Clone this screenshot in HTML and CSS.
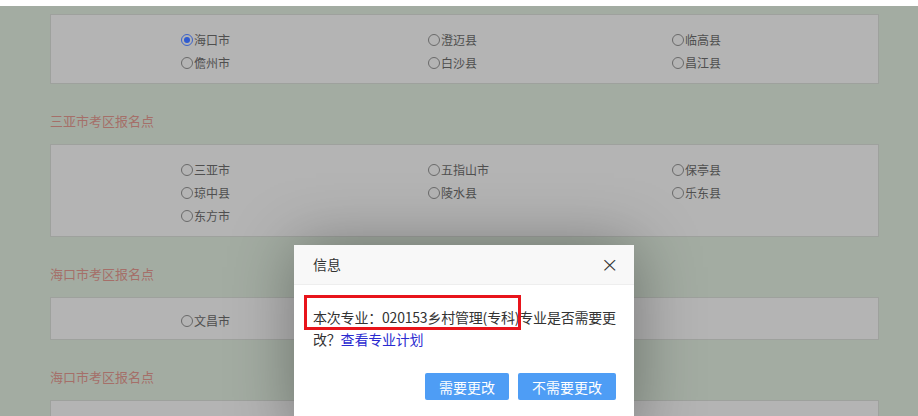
FILE: index.html
```html
<!DOCTYPE html>
<html lang="zh-CN">
<head>
  <meta charset="UTF-8">
  <title>报名点选择</title>
  <link rel="stylesheet" href="styles.css">
</head>
<body>

  <div class="topbar"></div>

  <div class="page">
    <div class="box">
      <div class="radios">
        <label class="radio checked"><span class="dot"></span>海口市</label>
        <label class="radio"><span class="dot"></span>澄迈县</label>
        <label class="radio"><span class="dot"></span>临高县</label>
        <label class="radio"><span class="dot"></span>儋州市</label>
        <label class="radio"><span class="dot"></span>白沙县</label>
        <label class="radio"><span class="dot"></span>昌江县</label>
      </div>
    </div>

    <div class="area-title">三亚市考区报名点</div>
    <div class="box">
      <div class="radios">
        <label class="radio"><span class="dot"></span>三亚市</label>
        <label class="radio"><span class="dot"></span>五指山市</label>
        <label class="radio"><span class="dot"></span>保亭县</label>
        <label class="radio"><span class="dot"></span>琼中县</label>
        <label class="radio"><span class="dot"></span>陵水县</label>
        <label class="radio"><span class="dot"></span>乐东县</label>
        <label class="radio"><span class="dot"></span>东方市</label>
      </div>
    </div>

    <div class="area-title">海口市考区报名点</div>
    <div class="box single">
      <div class="radios">
        <label class="radio"><span class="dot"></span>文昌市</label>
      </div>
    </div>

    <div class="area-title">海口市考区报名点</div>
    <div class="box">
      <div class="radios">
        <label class="radio"><span class="dot"></span>琼海市</label>
      </div>
    </div>
  </div>

  <!-- 信息弹窗 -->
  <div class="dialog">
    <div class="dialog-header">
      信息
      <span class="dialog-close">×</span>
    </div>
    <div class="dialog-body">
      <div class="mark"></div>
      <p class="msg">本次专业：020153乡村管理(专科)专业是否需要更改？<a href="#">查看专业计划</a></p>
    </div>
    <div class="dialog-btns">
      <button class="btn">需要更改</button>
      <button class="btn">不需要更改</button>
    </div>
  </div>

</body>
</html>
```

FILE: styles.css
```css
body {
  margin: 0;
  font-family: "Noto Sans CJK SC", "Microsoft YaHei", sans-serif;
  background: #a3aca2;
  overflow: hidden;
  height: 416px;
}

.topbar {
  height: 6px;
  background: #ffffff;
}

.page {
  padding: 8px 39px 0 50px;
}

.box {
  background: #b4b4b4;
  border: 1px solid #9ea19d;
  padding: 13px 0 9px 130px;
}

.box.single {
  padding: 11px 0 7px 130px;
}

.radios {
  display: grid;
  grid-template-columns: 247px 244px 1fr;
}

.radio {
  display: flex;
  align-items: center;
  height: 23px;
  font-size: 12px;
  color: #4f4f4f;
}

.radio .dot {
  width: 10px;
  height: 10px;
  border: 1px solid #6a6a6a;
  border-radius: 50%;
  margin-right: 1px;
  box-sizing: content-box;
  position: relative;
}

.radio.checked .dot {
  border-color: #3d63c9;
}

.radio.checked .dot::after {
  content: "";
  position: absolute;
  left: 2px;
  top: 2px;
  width: 6px;
  height: 6px;
  border-radius: 50%;
  background: #2f5bd0;
}

.area-title {
  margin: 27px 0 13px;
  font-size: 13px;
  line-height: 20px;
  color: #a56f69;
}

/* 弹窗 */
.dialog {
  position: absolute;
  left: 294px;
  top: 245px;
  width: 340px;
  height: 190px;
  background: #ffffff;
  box-shadow: 1px 1px 60px rgba(0, 0, 0, 0.35);
}

.dialog-header {
  height: 39px;
  line-height: 39px;
  padding-left: 19px;
  background: #f8f8f8;
  border-bottom: 1px solid #eeeeee;
  font-size: 14px;
  color: #333;
  position: relative;
}

.dialog-close {
  position: absolute;
  right: 15px;
  top: 0;
  font-size: 22px;
  color: #333;
  font-family: "DejaVu Sans", sans-serif;
  font-weight: 300;
}

.dialog-body {
  position: relative;
  padding: 21px 10px 0 19px;
  height: 44px;
}

.msg {
  margin: 0;
  width: 305px;
  font-size: 14px;
  line-height: 22px;
  letter-spacing: -0.2px;
  color: #333;
}

.msg a {
  color: #2a2ad0;
  text-decoration: none;
}

.mark {
  position: absolute;
  left: 10px;
  top: 10px;
  width: 211px;
  height: 29px;
  border: 3px solid #e8141b;
}

.dialog-btns {
  display: flex;
  justify-content: flex-end;
  gap: 9px;
  padding: 23px 18px 0 0;
}

.btn {
  height: 27px;
  padding: 0 14px;
  border: none;
  border-radius: 2px;
  background: #4e9df5;
  color: #ffffff;
  font-size: 14px;
  font-family: inherit;
}
```
